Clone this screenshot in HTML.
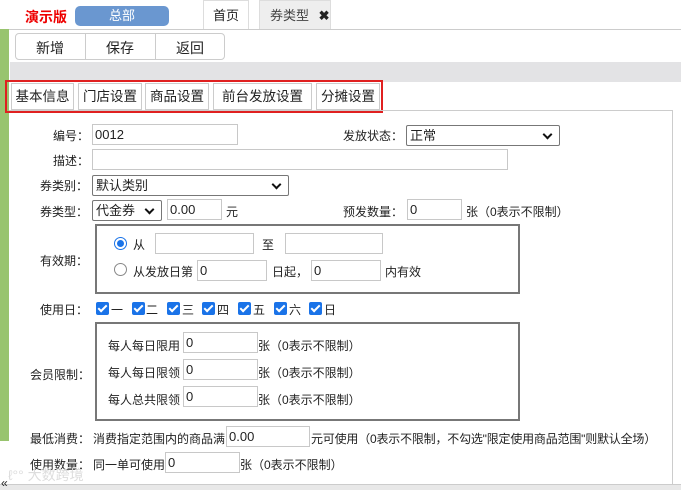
<!DOCTYPE html>
<html><head><meta charset="utf-8"><style>
*{margin:0;padding:0;box-sizing:border-box}
body{width:681px;height:490px;background:#fff;position:relative;overflow:hidden;font-family:"Liberation Sans","Noto Sans CJK SC",sans-serif;font-size:12px;color:#222}
.a{position:absolute;white-space:nowrap}
.in{position:absolute;height:21px;border:1px solid #c8c8c8;background:#fff;padding-left:2px;line-height:19px;font-size:13px}
.sel{position:absolute;height:21px;border:1px solid #777;border-radius:2px;background:#fff;padding-left:3px;line-height:19px;font-size:13px}
.sel:after{content:"";position:absolute;right:8px;top:5px;width:5px;height:5px;border-right:2px solid #111;border-bottom:2px solid #111;transform:rotate(45deg)}
.cb{position:absolute;width:13px;height:13px;background:#1a73e8;border-radius:2px}
.cb:after{content:"";position:absolute;left:4px;top:1px;width:3px;height:7px;border-right:2px solid #fff;border-bottom:2px solid #fff;transform:rotate(45deg)}
.tab{position:absolute;top:83px;height:27px;border:1px solid #ccc;line-height:25px;text-align:center;font-size:13.5px}
</style></head><body>
<div class="a" style="left:25px;top:7px;color:#e00;font-weight:bold;font-size:14px">演示版</div>
<div class="a" style="left:75px;top:6px;width:94px;height:20px;background:#6a97d0;border-radius:5px;color:#fff;text-align:center;line-height:20px;font-size:13px">总部</div>
<div class="a" style="left:203px;top:0;width:46px;height:29px;border:1px solid #ddd;border-bottom:none;text-align:center;line-height:30px;font-size:13px">首页</div>
<div class="a" style="left:259px;top:0;width:72px;height:29px;background:#eee;border:1px solid #ddd;border-bottom:none;line-height:30px;padding-left:10px;color:#444;font-size:13px">券类型 <b style="margin-left:6px;color:#222">✖</b></div>
<div class="a" style="left:0;top:29px;width:681px;height:1px;background:#ccc"></div>
<div class="a" style="left:0;top:29px;width:9px;height:412px;background:#98c46e"></div>
<div class="a" style="left:15px;top:33px;width:210px;height:27px;border:1px solid #ccc;border-radius:4px"></div>
<div class="a" style="left:85px;top:33px;width:1px;height:27px;background:#ccc"></div>
<div class="a" style="left:155px;top:33px;width:1px;height:27px;background:#ccc"></div>
<div class="a" style="left:36px;top:38px;font-size:14px">新增</div>
<div class="a" style="left:106px;top:38px;font-size:14px">保存</div>
<div class="a" style="left:176px;top:38px;font-size:14px">返回</div>
<div class="a" style="left:10px;top:62px;width:671px;height:20px;background:#e3e3e5"></div>
<div class="a" style="left:5px;top:80px;width:378px;height:33px;border:2px solid #e02020"></div>
<div class="tab" style="left:11px;width:63px">基本信息</div>
<div class="tab" style="left:78px;width:64px">门店设置</div>
<div class="tab" style="left:145px;width:64px">商品设置</div>
<div class="tab" style="left:213px;width:99px">前台发放设置</div>
<div class="tab" style="left:316px;width:64px">分摊设置</div>
<div class="a" style="left:9px;top:110px;width:664px;height:375px;border-top:1px solid #ccc;border-right:1px solid #ccc"></div>
<div class="a" style="left:0;top:484px;width:681px;height:6px;background:#e8e8e8;border-top:1px solid #ccc"></div>
<div class="a" style="left:1px;top:476px;font-size:12px">«</div>

<div class="a" style="left:53px;top:127px">编号：</div><div class="in" style="left:92px;top:124px;width:146px">0012</div>
<div class="a" style="left:343px;top:127px">发放状态：</div><div class="sel" style="left:406px;top:125px;width:154px">正常</div>
<div class="a" style="left:53px;top:152px">描述：</div><div class="in" style="left:92px;top:149px;width:416px"></div>
<div class="a" style="left:40px;top:177px">券类别：</div><div class="sel" style="left:92px;top:175px;width:197px">默认类别</div>
<div class="a" style="left:40px;top:203px">券类型：</div><div class="sel" style="left:92px;top:200px;width:70px">代金券</div>
<div class="in" style="left:167px;top:199px;width:55px">0.00</div><div class="a" style="left:226px;top:203px">元</div>
<div class="a" style="left:343px;top:203px">预发数量：</div><div class="in" style="left:407px;top:199px;width:55px">0</div><div class="a" style="left:466px;top:203px">张（0表示不限制）</div>

<div class="a" style="left:95px;top:224px;width:425px;height:70px;border:2px solid #777"></div>
<div class="a" style="left:40px;top:252px">有效期：</div>
<div class="a" style="left:114px;top:237px;width:13px;height:13px;border:1px solid #1a73e8;border-radius:50%"><div style="margin:2px;width:7px;height:7px;border-radius:50%;background:#1a73e8"></div></div>
<div class="a" style="left:133px;top:236px">从</div><div class="in" style="left:155px;top:233px;width:99px"></div>
<div class="a" style="left:262px;top:236px">至</div><div class="in" style="left:285px;top:233px;width:98px"></div>
<div class="a" style="left:114px;top:263px;width:13px;height:13px;border:1px solid #888;border-radius:50%"></div>
<div class="a" style="left:133px;top:263px">从发放日第</div><div class="in" style="left:197px;top:260px;width:70px">0</div>
<div class="a" style="left:272px;top:263px">日起，</div><div class="in" style="left:311px;top:260px;width:70px">0</div>
<div class="a" style="left:385px;top:263px">内有效</div>

<div class="a" style="left:40px;top:301px">使用日：</div>
<div class="cb" style="left:96px;top:302px"></div><div class="a" style="left:111px;top:301px">一</div>
<div class="cb" style="left:132px;top:302px"></div><div class="a" style="left:146px;top:301px">二</div>
<div class="cb" style="left:167px;top:302px"></div><div class="a" style="left:182px;top:301px">三</div>
<div class="cb" style="left:202px;top:302px"></div><div class="a" style="left:217px;top:301px">四</div>
<div class="cb" style="left:238px;top:302px"></div><div class="a" style="left:253px;top:301px">五</div>
<div class="cb" style="left:274px;top:302px"></div><div class="a" style="left:289px;top:301px">六</div>
<div class="cb" style="left:309px;top:302px"></div><div class="a" style="left:324px;top:301px">日</div>

<div class="a" style="left:95px;top:322px;width:425px;height:99px;border:2px solid #777"></div>
<div class="a" style="left:30px;top:366px">会员限制：</div>
<div class="a" style="left:108px;top:337px">每人每日限用</div><div class="in" style="left:183px;top:332px;width:75px">0</div><div class="a" style="left:258px;top:337px">张（0表示不限制）</div>
<div class="a" style="left:108px;top:364px">每人每日限领</div><div class="in" style="left:183px;top:359px;width:75px">0</div><div class="a" style="left:258px;top:364px">张（0表示不限制）</div>
<div class="a" style="left:108px;top:391px">每人总共限领</div><div class="in" style="left:183px;top:386px;width:75px">0</div><div class="a" style="left:258px;top:391px">张（0表示不限制）</div>

<div class="a" style="left:30px;top:430px">最低消费：</div><div class="a" style="left:93px;top:430px">消费指定范围内的商品满</div><div class="in" style="left:226px;top:426px;width:84px">0.00</div>
<div class="a" style="left:311px;top:430px;letter-spacing:-0.2px">元可使用（0表示不限制，不勾选"限定使用商品范围"则默认全场）</div>
<div class="a" style="left:30px;top:456px">使用数量：</div><div class="a" style="left:93px;top:456px">同一单可使用</div><div class="in" style="left:165px;top:452px;width:75px">0</div>
<div class="a" style="left:240px;top:456px">张（0表示不限制）</div>
<div class="a" style="left:8px;top:465px;color:#ddd;font-size:14px">ℓ°° 大数跨境</div>
</body></html>
